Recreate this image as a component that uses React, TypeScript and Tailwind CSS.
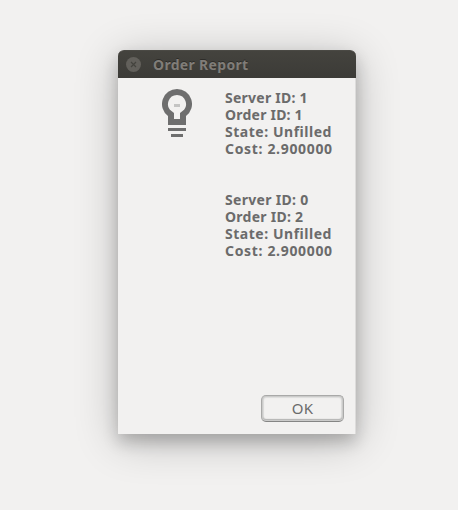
const reports = [
  [
    { text: "Server ID: 1", spacing: "tracking-[0.25px]" },
    { text: "Order ID: 1", spacing: "tracking-[0.22px]" },
    { text: "State: Unfilled", spacing: "tracking-[0.53px]" },
    { text: "Cost: 2.900000", spacing: "tracking-[0.67px]" },
  ],
  [
    { text: "Server ID: 0", spacing: "tracking-[0.3px]" },
    { text: "Order ID: 2", spacing: "tracking-[0.26px]" },
    { text: "State: Unfilled", spacing: "tracking-[0.53px]" },
    { text: "Cost: 2.900000", spacing: "tracking-[0.67px]" },
  ],
];

function CloseIcon() {
  return (
    <svg width="16" height="16" viewBox="0 0 16 16" className="shrink-0">
      <circle cx="7.500" cy="7.500" r="7.500" fill="#62605b" />
      <path d="M5 5 10 10M10 5 5 10" stroke="#44433e" strokeWidth="1.2" />
    </svg>
  );
}

function BulbIcon() {
  return (
    <svg width="30" height="48" viewBox="0 0 30 48" className="mt-[11px] shrink-0">
      <path
        fill="#6e6e6e"
        fillRule="evenodd"
        d="M15 0a15 15 0 0 1 9 27v9H6v-9A15 15 0 0 1 15 0Zm0 6a9 9 0 0 0-5.500 16.100L12 24v6h6v-6l2.500-1.900A9 9 0 0 0 15 6Z"
      />
      <path fill="#c4c4c3" d="M12 15h6v3h-6z" />
      <path fill="#6e6e6e" d="M6 39h18v3H6zM9 45h12v3H9z" />
    </svg>
  );
}

export default function App() {
  return (
    <main className="flex h-[510px] w-[458px] items-start overflow-hidden bg-[#f2f1f0] pt-[50px] pl-[118px] font-['Noto_Sans',sans-serif]">
      <section className="flex h-[384px] w-[238px] flex-col rounded-t-[6px] bg-[#f2f1f0] shadow-[0_8px_16px_rgba(0,0,0,0.2),0_7px_44px_rgba(0,0,0,0.24)]">
        <header className="flex h-7 shrink-0 items-center rounded-t-[6px] border-t border-[#4a4944] bg-linear-to-b from-[#44433e] to-[#3c3b37] pl-2">
          <CloseIcon />
          <h1 className="ml-[11px] text-sm font-bold leading-[17px] tracking-[0.32px] whitespace-nowrap text-[#807d78] [text-shadow:0_-1px_#2d2c29]">
            Order Report
          </h1>
        </header>
        <div className="flex flex-1 border-r border-[#dddcdb] pl-11">
          <BulbIcon />
          <div className="ml-[33px] flex flex-col gap-[34px] pt-[11px] text-sm font-bold leading-[17px] whitespace-nowrap text-[#6b6b6b]">
            {reports.map((lines, i) => (
              <div key={i}>
                {lines.map((line) => (
                  <p key={line.text} className={line.spacing}>
                    {line.text}
                  </p>
                ))}
              </div>
            ))}
          </div>
        </div>
        <footer className="flex h-[39px] shrink-0 justify-end border-r border-[#dddcdb] pr-[11px]">
          <button className="flex h-[27px] w-[83px] items-center justify-center rounded-[5px] border border-[#a9a9a8] border-b-[#858584] bg-[#f2f1f0] text-[15px] leading-[17px] tracking-[0.2px] text-[#6b6b6b] shadow-[inset_0_0_0_1px_#cbcbca,inset_0_-1px_1px_1px_#b5b5b4,inset_0_0_1px_2px_#dddddc]">
            OK
          </button>
        </footer>
      </section>
    </main>
  );
}
